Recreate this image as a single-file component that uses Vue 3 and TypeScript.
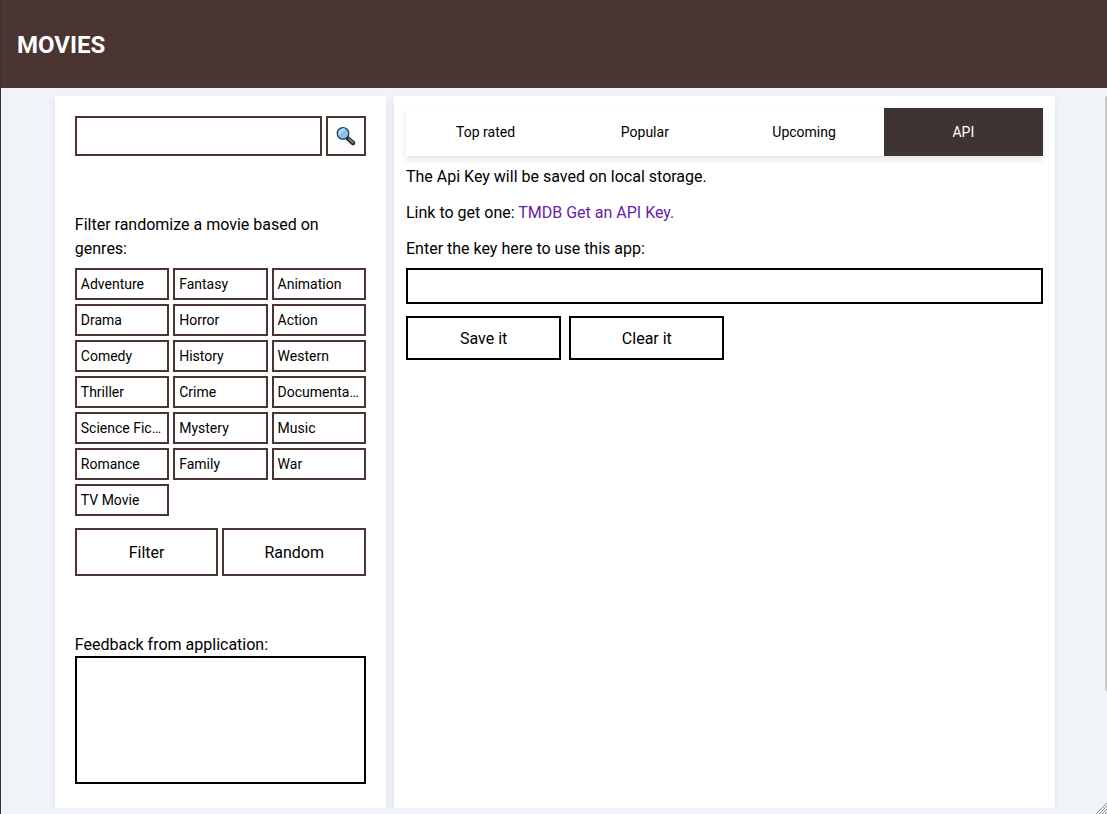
<script setup lang="ts">
import { ref } from 'vue'

const genres: string[] = [
  'Adventure', 'Fantasy', 'Animation', 'Drama', 'Horror', 'Action', 'Comedy',
  'History', 'Western', 'Thriller', 'Crime', 'Documentary', 'Science Fiction',
  'Mystery', 'Music', 'Romance', 'Family', 'War', 'TV Movie',
]
const tabs: string[] = ['Top rated', 'Popular', 'Upcoming', 'API']
const activeTab = ref<string>('API')
const picked = ref<string[]>([])
const query = ref<string>('')
const apiKey = ref<string>('')
const feedback = ref<string>('')

function toggleGenre(name: string): void {
  picked.value = picked.value.includes(name)
    ? picked.value.filter((g) => g !== name)
    : [...picked.value, name]
}
</script>

<template>
  <div class="app">
    <header class="header"><h1>MOVIES</h1></header>
    <div class="body">
      <aside class="panel sidebar">
        <form class="search" @submit.prevent>
          <input v-model="query" class="search-input" type="text" aria-label="Search" />
          <button class="search-button" type="submit" aria-label="Search">
            <svg width="20" height="20" viewBox="0 0 20 20">
              <path d="M11.8 12.3 L17 17" stroke="#20272b" stroke-width="4.4" stroke-linecap="round" />
              <path d="M13.2 13.1 L16.8 16.5" stroke="#7b7f80" stroke-width="1.9" stroke-linecap="round" />
              <circle cx="7" cy="7.4" r="5.8" fill="#82bdf0" stroke="#263741" stroke-width="1.2" />
              <path d="M3 9.5 L9.8 2.9 A5 5 0 0 0 3 9.5Z" fill="#b5daf8" />
              <path d="M5.6 11.8 L11.4 6.3" stroke="#a4d1f6" stroke-width="1" />
            </svg>
          </button>
        </form>
        <p class="filter-label">Filter randomize a movie based on genres:</p>
        <div class="genres">
          <button
            v-for="genre in genres"
            :key="genre"
            class="genre"
            :class="{ picked: picked.includes(genre) }"
            type="button"
            @click="toggleGenre(genre)"
          >{{ genre }}</button>
        </div>
        <div class="actions">
          <button type="button">Filter</button>
          <button type="button">Random</button>
        </div>
        <p class="feedback-label">Feedback from application:</p>
        <output class="feedback">{{ feedback }}</output>
      </aside>
      <main class="panel content">
        <nav class="tabs">
          <button
            v-for="tab in tabs"
            :key="tab"
            type="button"
            :class="{ active: tab === activeTab }"
            @click="activeTab = tab"
          >{{ tab }}</button>
        </nav>
        <p>The Api Key will be saved on local storage.</p>
        <p>Link to get one: <a href="#">TMDB Get an API Key.</a></p>
        <p>Enter the key here to use this app:</p>
        <input v-model="apiKey" class="key-input" type="text" aria-label="API key" />
        <div class="key-actions">
          <button type="button">Save it</button>
          <button type="button" @click="apiKey = ''">Clear it</button>
        </div>
      </main>
    </div>
    <div class="scroll-thumb"></div>
    <svg class="grip" width="11" height="11" viewBox="0 0 11 11">
      <path d="M0 11 L11 0 M3 11 L11 3 M6 11 L11 6 M9 11 L11 9" stroke="#8c8c8c" stroke-width="1" />
    </svg>
  </div>
</template>

<style>
body {
  margin: 0;
  overflow: hidden;
}
</style>

<style scoped>
.app,
.app * {
  box-sizing: border-box;
}
.app {
  position: relative;
  display: flex;
  flex-direction: column;
  height: 100vh;
  border-left: 1px solid #34333a;
  background: #f0f4f9;
  color: #000;
  font: 16px/24px Roboto, sans-serif;
}
button,
input {
  margin: 0;
  background: #fff;
  color: inherit;
  font: inherit;
  border-radius: 0;
}
p {
  margin: 0;
}
.header {
  flex: none;
  display: flex;
  align-items: center;
  height: 88px;
  padding: 2px 16px 0;
  background: #4a3533;
  color: #fff;
}
h1 {
  margin: 0;
  font-size: 24px;
  line-height: 36px;
  font-weight: 700;
}
.body {
  flex: 1;
  display: flex;
  gap: 8px;
  min-height: 0;
  margin-bottom: 6px;
  padding: 8px 52px 0 53.8px;
  overflow: hidden;
}
.panel {
  background: #fff;
  box-shadow: 0 4px 6px rgba(0, 0, 0, 0.1);
}
.sidebar {
  flex: none;
  width: 331.2px;
  padding: 20px;
}
.content {
  flex: 1;
  padding: 12px;
}
.search {
  display: flex;
  gap: 4px;
  height: 40px;
}
.search-input {
  flex: 1;
  min-width: 0;
  border: 2px solid #4a3533;
}
.search-button {
  display: flex;
  align-items: center;
  justify-content: center;
  width: 40px;
  padding: 0;
  border: 2px solid #4a3533;
}
.filter-label {
  margin: 57px 0 7px;
}
.genres {
  display: grid;
  grid-template-columns: repeat(3, minmax(0, 1fr));
  gap: 4px;
}
.genre {
  height: 32px;
  padding: 0 4px;
  border: 2px solid #4a3533;
  overflow: hidden;
  font-size: 14px;
  line-height: 28px;
  text-align: left;
  text-overflow: ellipsis;
  white-space: nowrap;
}
.genre.picked {
  background: #4a3533;
  color: #fff;
}
.actions {
  display: grid;
  grid-template-columns: 1fr 1fr;
  gap: 4px;
  margin-top: 12px;
}
.actions button {
  height: 48px;
  padding: 2px 0 0;
  border: 2px solid #4a3533;
}
.feedback-label {
  margin: 57px 0 -1px;
}
.feedback {
  display: block;
  height: 128px;
  border: 2px solid #000;
}
.tabs {
  display: grid;
  grid-template-columns: repeat(4, 1fr);
  height: 48px;
  margin-bottom: 9px;
  box-shadow: 0 4px 6px rgba(0, 0, 0, 0.1);
}
.tabs button {
  border: 0;
  font-size: 14px;
}
.tabs .active {
  background: #3e3432;
  color: #fff;
}
.content p {
  margin-bottom: 12px;
}
.content a {
  color: #681da8;
  text-decoration: none;
}
.content .key-input {
  display: block;
  width: 100%;
  height: 36px;
  margin-top: -5px;
  border: 2px solid #000;
}
.key-actions {
  display: flex;
  gap: 8px;
  margin-top: 12px;
}
.key-actions button {
  width: 155.25px;
  height: 44px;
  padding: 2px 0 0;
  border: 2px solid #000;
}
.scroll-thumb {
  position: absolute;
  top: 96px;
  right: 0;
  width: 2px;
  height: 595px;
  background: #c8c8c8;
  border-radius: 2px 0 0 2px;
}
.grip {
  position: absolute;
  right: 0;
  bottom: 0;
}
</style>
